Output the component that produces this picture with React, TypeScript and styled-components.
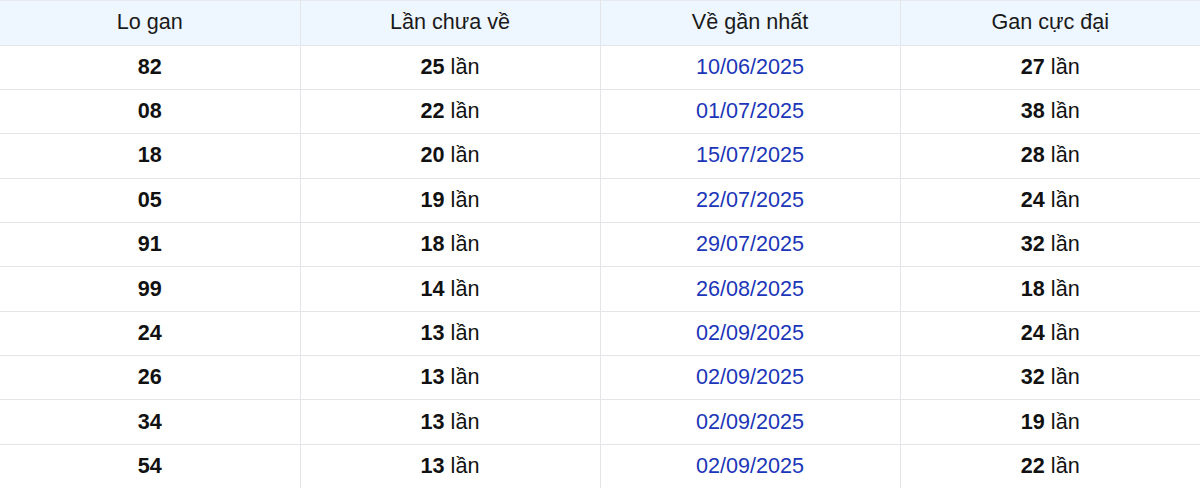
import React from "react";
import styled, { createGlobalStyle } from "styled-components";

const Global = createGlobalStyle`
  html, body { margin: 0; padding: 0; background: #fff; }
  body { font-family: "Liberation Sans", Arial, sans-serif; }
`;

const Table = styled.table`
  width: 1200px;
  border-collapse: collapse;
  table-layout: fixed;
  font-size: 21.6px;
  color: #111;
`;

const HeadCell = styled.th`
  height: 41.6px;
  padding: 0 0 2px;
  font-weight: 400;
  background: #eef6ff;
  color: #1a1a1a;
  text-align: center;
  border: 1px solid #e3e5e8;
  &:first-child { border-left: none; }
  &:last-child { border-right: none; }
`;

const HeadRow = styled.tr`
  & > th { border-top: 1px solid #e6eaee; }
`;

const Cell = styled.td<{ $tone?: "date" | "plain" }>`
  height: 42.36px;
  padding: 0 0 1px;
  text-align: center;
  border: 1px solid #e3e5e8;
  color: ${(p) => (p.$tone === "date" ? "#1b36b8" : "#111")};
  &:first-child { border-left: none; }
  &:last-child { border-right: none; }
`;

const Num = styled.b`
  font-weight: 700;
  color: #111;
`;

const rows = [
  ["82", "25", "10/06/2025", "27"],
  ["08", "22", "01/07/2025", "38"],
  ["18", "20", "15/07/2025", "28"],
  ["05", "19", "22/07/2025", "24"],
  ["91", "18", "29/07/2025", "32"],
  ["99", "14", "26/08/2025", "18"],
  ["24", "13", "02/09/2025", "24"],
  ["26", "13", "02/09/2025", "32"],
  ["34", "13", "02/09/2025", "19"],
  ["54", "13", "02/09/2025", "22"],
];

export default function App() {
  return (
    <>
      <Global />
      <Table>
        <thead>
          <HeadRow>
            <HeadCell>Lo gan</HeadCell>
            <HeadCell>Lần chưa về</HeadCell>
            <HeadCell>Về gần nhất</HeadCell>
            <HeadCell>Gan cực đại</HeadCell>
          </HeadRow>
        </thead>
        <tbody>
          {rows.map((r, i) => (
            <tr key={i}>
              <Cell>
                <Num>{r[0]}</Num>
              </Cell>
              <Cell>
                <Num>{r[1]}</Num> lần
              </Cell>
              <Cell $tone="date">{r[2]}</Cell>
              <Cell>
                <Num>{r[3]}</Num> lần
              </Cell>
            </tr>
          ))}
        </tbody>
      </Table>
    </>
  );
}
